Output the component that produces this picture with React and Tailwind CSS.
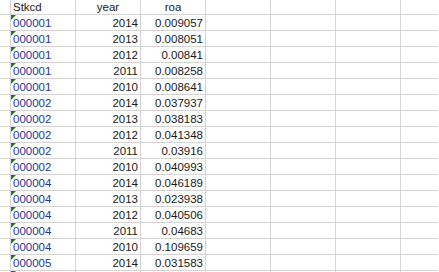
const ROWS = [
  ['000001', '2014', '0.009057'],
  ['000001', '2013', '0.008051'],
  ['000001', '2012', '0.00841'],
  ['000001', '2011', '0.008258'],
  ['000001', '2010', '0.008641'],
  ['000002', '2014', '0.037937'],
  ['000002', '2013', '0.038183'],
  ['000002', '2012', '0.041348'],
  ['000002', '2011', '0.03916'],
  ['000002', '2010', '0.040993'],
  ['000004', '2014', '0.046189'],
  ['000004', '2013', '0.023938'],
  ['000004', '2012', '0.040506'],
  ['000004', '2011', '0.04683'],
  ['000004', '2010', '0.109659'],
  ['000005', '2014', '0.031583'],
  ['', '', ''],
]

function Empty() {
  return (
    <>
      <div className="w-[65px] shrink-0 border-r border-[#d4d4d4]" />
      <div className="w-[65px] shrink-0 border-r border-[#d4d4d4]" />
      <div className="w-[65px] shrink-0 border-r border-[#d4d4d4]" />
      <div className="w-[38px] shrink-0" />
    </>
  )
}

export default function App() {
  return (
    <div
      className="w-[439px] h-[272px] overflow-hidden bg-white text-[11.5px] leading-none text-[#1a1a1a]"
      style={{ fontFamily: '"Liberation Sans", Arial, sans-serif' }}
    >
      {/* Header */}
      <div className="flex h-[15px] w-[438px] border-b border-[#d4d4d4]">
        <div className="w-[11px] shrink-0 border-r border-[#d4d4d4]" />
        <div className="w-[65px] shrink-0 border-r border-[#d4d4d4] pl-[2px] pt-[2px]">Stkcd</div>
        <div className="w-[65px] shrink-0 border-r border-[#d4d4d4] text-center pt-[2px]">year</div>
        <div className="w-[65px] shrink-0 border-r border-[#d4d4d4] text-center pt-[2px]">roa</div>
        <Empty />
      </div>

      {ROWS.map((r, i) => (
        <div key={i} className="flex h-[16px] w-[438px] border-b border-[#d4d4d4]">
          <div className="w-[11px] shrink-0 border-r border-[#d4d4d4]" />
          <div className="relative w-[65px] shrink-0 border-r border-[#d4d4d4] pl-[2px] pt-[3px] text-[#26378f]">
            <span className="absolute left-0 top-0 w-0 h-0 border-t-[5px] border-r-[5px] border-t-[#1e7d22] border-r-transparent" />
            {r[0]}
          </div>
          <div className="w-[65px] shrink-0 border-r border-[#d4d4d4] text-right pr-[2px] pt-[3px]">{r[1]}</div>
          <div className="w-[65px] shrink-0 border-r border-[#d4d4d4] text-right pr-[2px] pt-[3px]">{r[2]}</div>
          <Empty />
        </div>
      ))}
    </div>
  )
}
